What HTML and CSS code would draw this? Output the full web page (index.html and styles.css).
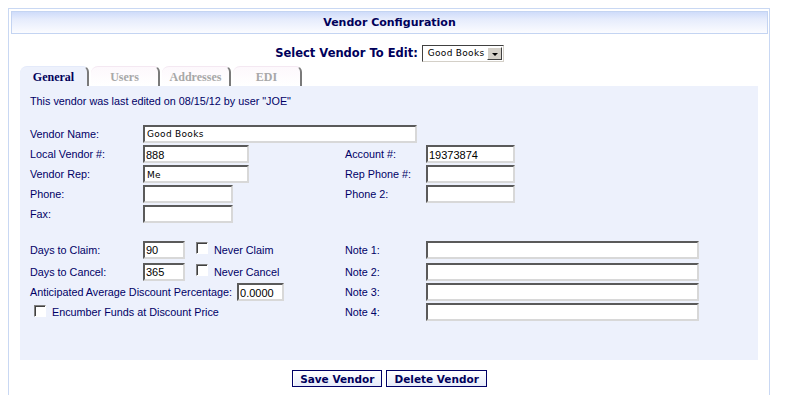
FILE: index.html
```html
<!DOCTYPE html>
<html lang="en">
<head>
  <meta charset="UTF-8">
  <title>Vendor Configuration</title>
  <link rel="stylesheet" href="styles.css">
</head>
<body>
  <div class="panel">
    <div class="panel-head">Vendor Configuration</div>

    <div class="picker">
      <span class="picker-label">Select Vendor To Edit:</span>
      <span class="select">
        <span class="select-value">Good Books</span>
        <span class="select-arrow"></span>
      </span>
    </div>

    <div class="tabs">
      <span class="tab active">General</span>
      <span class="tab">Users</span>
      <span class="tab">Addresses</span>
      <span class="tab">EDI</span>
    </div>

    <div class="tab-body">
      <div class="edited">This vendor was last edited on 08/15/12 by user "JOE"</div>

      <div class="form-grid top-grid">
        <span class="lbl">Vendor Name:</span>
        <span class="span-rest"><input type="text" class="w-name mono" value="Good Books"></span>

        <span class="lbl">Local Vendor #:</span>
        <span><input type="text" class="w-mid" value="888"></span>
        <span class="lbl">Account #:</span>
        <span><input type="text" class="w-acct" value="19373874"></span>

        <span class="lbl">Vendor Rep:</span>
        <span><input type="text" class="w-mid mono" value="Me"></span>
        <span class="lbl">Rep Phone #:</span>
        <span><input type="text" class="w-acct"></span>

        <span class="lbl">Phone:</span>
        <span><input type="text" class="w-phone"></span>
        <span class="lbl">Phone 2:</span>
        <span><input type="text" class="w-acct"></span>

        <span class="lbl">Fax:</span>
        <span><input type="text" class="w-phone"></span>
      </div>

      <div class="form-grid bottom-grid">
        <span class="lbl">Days to Claim:</span>
        <span class="inline">
          <input type="text" class="w-days" value="90">
          <input type="checkbox" class="check">
          <span class="check-lbl">Never Claim</span>
        </span>
        <span class="lbl">Note 1:</span>
        <span><input type="text" class="w-note"></span>

        <span class="lbl">Days to Cancel:</span>
        <span class="inline">
          <input type="text" class="w-days" value="365">
          <input type="checkbox" class="check">
          <span class="check-lbl">Never Cancel</span>
        </span>
        <span class="lbl">Note 2:</span>
        <span><input type="text" class="w-note"></span>

        <span class="inline span-left">
          <span class="lbl">Anticipated Average Discount Percentage:</span>
          <input type="text" class="w-pct" value="0.0000">
        </span>
        <span class="lbl">Note 3:</span>
        <span><input type="text" class="w-note"></span>

        <span class="inline span-left encumber">
          <input type="checkbox" class="check">
          <span class="check-lbl">Encumber Funds at Discount Price</span>
        </span>
        <span class="lbl">Note 4:</span>
        <span><input type="text" class="w-note"></span>
      </div>
    </div>

    <div class="actions">
      <button type="button" class="btn">Save Vendor</button>
      <button type="button" class="btn">Delete Vendor</button>
    </div>
  </div>
</body>
</html>
```

FILE: styles.css
```css
html, body { margin: 0; padding: 0; background: #fff; overflow: hidden; }
body { padding: 8px 0 0 8px; font-family: "Liberation Sans", Arial, sans-serif; font-size: 10.8px; color: #000066; }

.panel {
  width: 757px;
  height: 384px;
  border: 1px solid #c9d8f3;
  border-bottom: none;
  padding: 2px 1px 0 2px;
}

.panel-head {
  height: 21px;
  line-height: 21px;
  border: 1px solid #c4d4f2;
  background: linear-gradient(#cfdcfa 0%, #e6ecfc 35%, #fbfcff 100%);
  text-align: center;
  font-family: "DejaVu Sans", Verdana, sans-serif;
  font-weight: bold;
  font-size: 11px;
  color: #00005a;
}

.picker {
  display: flex;
  justify-content: center;
  align-items: center;
  gap: 4px;
  margin-top: 10px;
  height: 18px;
}
.picker-label {
  font-family: "DejaVu Sans", Verdana, sans-serif;
  font-weight: bold;
  font-size: 11.5px;
  color: #00005a;
}
.select {
  display: flex;
  align-items: center;
  width: 82px;
  height: 17px;
  box-sizing: border-box;
  border: 1px solid;
  border-color: #404040 #d4d0c8 #d4d0c8 #404040;
  background: #fff;
}
.select-value {
  flex: 1;
  padding-left: 5px;
  white-space: nowrap;
  font-family: "DejaVu Sans", Verdana, sans-serif;
  font-size: 9px;
  color: #000;
  letter-spacing: 0.3px;
}
.select-arrow {
  width: 15px;
  height: 13px;
  margin-right: 1px;
  background: #d4d0c8;
  border: 1px solid;
  border-color: #fff #404040 #404040 #fff;
  box-sizing: border-box;
  position: relative;
}
.select-arrow::after {
  content: "";
  position: absolute;
  left: 4px;
  top: 5px;
  border-left: 3px solid transparent;
  border-right: 3px solid transparent;
  border-top: 3px solid #000;
}

.tabs {
  display: flex;
  gap: 2px;
  margin: 4px 0 0 9px;
  height: 20px;
}
.tab {
  width: 69px;
  height: 20px;
  box-sizing: border-box;
  border-right: 2px solid #7a7a7a;
  border-top: 1px solid #f4e8f2;
  border-radius: 7px 6px 0 0;
  background: linear-gradient(#fdf8fc, #fff);
  font-family: "Liberation Serif", "Times New Roman", serif;
  font-weight: bold;
  font-size: 12px;
  line-height: 20px;
  text-align: center;
  color: #a8a8a8;
}
.tab.active {
  background: #edf1fc;
  border-top-color: #e4eafa;
  color: #00005a;
}

.tab-body {
  margin: 0 10px 0 9px;
  background: #edf1fc;
  padding: 9px 10px 40px 10px;
  height: 225px;
}
.edited { line-height: 12px; }

.form-grid {
  display: grid;
  grid-template-columns: 113px 202px 81px auto;
  align-items: center;
}
.top-grid {
  margin-top: 17px;
  grid-template-rows: 19px 18px 18px 18px 18px;
  row-gap: 2px;
}
.bottom-grid {
  margin-top: 16px;
  grid-template-rows: 21px 19px 18px 18px;
  row-gap: 2px;
}
.lbl { white-space: nowrap; }
.span-rest { grid-column: 2 / -1; }
.span-left { grid-column: 1 / span 2; }
.inline { display: flex; align-items: center; }
.encumber { padding-left: 4px; }

input[type="text"] {
  display: block;
  height: 18px;
  box-sizing: border-box;
  margin: 0;
  padding: 1px 1px 0;
  border: 2px solid;
  border-color: #5a5a5a #d8d8d8 #d8d8d8 #5a5a5a;
  background: #fff;
  font-family: "Liberation Sans", Arial, sans-serif;
  font-size: 11px;
  color: #000;
  outline: none;
}
input.mono {
  font-family: "DejaVu Sans", Verdana, sans-serif;
  font-size: 9px;
  letter-spacing: 0.3px;
  padding-left: 2px;
}
.w-name { width: 274px; }
.w-mid { width: 106px; }
.w-acct { width: 89px; }
.w-phone { width: 90px; }
.w-days { width: 42px; }
.w-note { width: 273px; }
.w-pct { width: 47px; margin-left: 5px !important; }

.check {
  -webkit-appearance: none;
  appearance: none;
  width: 12px;
  height: 12px;
  margin: 0 6px 4px 11px;
  border: 1px solid;
  border-color: #808080 #fff #fff #808080;
  box-shadow: inset 1px 1px 0 #404040;
  background: #fff;
}
.encumber .check { margin-left: 0; margin-bottom: 2px; }
.check-lbl { white-space: nowrap; }

.actions {
  display: flex;
  justify-content: center;
  gap: 4px;
  margin-top: 10px;
}
.btn {
  height: 17px;
  padding: 0 7px;
  border: 1px solid #000066;
  box-shadow: inset 1px 1px 0 #fff;
  background: linear-gradient(#ffffff, #e6ebfa);
  font-family: "DejaVu Sans", Verdana, sans-serif;
  font-weight: bold;
  font-size: 10.5px;
  color: #00005a;
  cursor: pointer;
}
```
